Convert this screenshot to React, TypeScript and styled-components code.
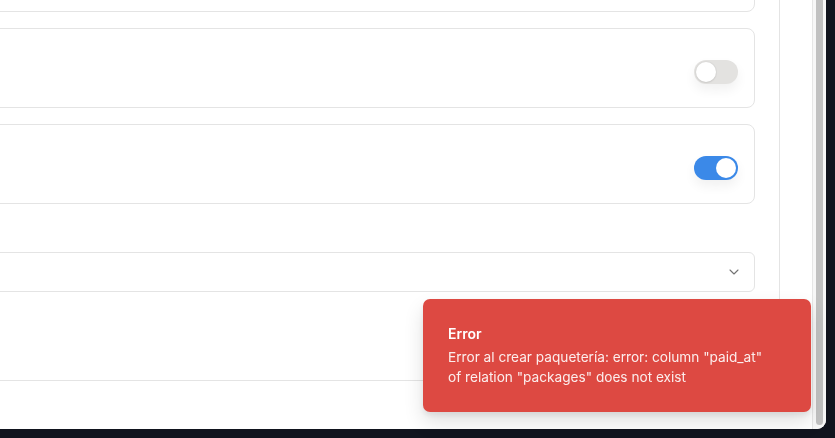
import styled, { createGlobalStyle } from 'styled-components'
import { ChevronDown } from 'lucide-react'

const GlobalStyle = createGlobalStyle`
  html, body {
    margin: 0;
    padding: 0;
    background: #11141e;
    font-family: Inter, "Noto Sans", sans-serif;
    overflow: hidden;
  }
  * {
    box-sizing: border-box;
  }
`

const Desktop = styled.div`
  width: 835px;
  height: 438px;
  background: #11141e;
`

const Window = styled.div`
  display: flex;
  width: 826px;
  height: 429px;
  background: #ffffff;
  border-bottom-right-radius: 9px;
  overflow: hidden;
`

const Main = styled.div`
  display: flex;
  flex: 1;
  min-width: 0;
  padding-right: 32px;
  overflow: hidden;
`

const Panel = styled.section`
  display: flex;
  flex-direction: column;
  flex: 1;
  margin-left: -240px;
  margin-top: -68px;
  height: 449px;
  padding: 0 24px 88px 0;
  border-right: 1px solid #e4e4e4;
  border-bottom: 1px solid #e4e4e4;
`

const CardList = styled.div`
  display: flex;
  flex-direction: column;
  gap: 16px;
`

const SettingCard = styled.div`
  display: flex;
  align-items: flex-start;
  justify-content: flex-end;
  height: 80px;
  padding: 31px 16px 0 16px;
  border: 1px solid #e4e4e4;
  border-radius: 8px;
  background: #ffffff;
`

const Toggle = styled.button<{ $on?: boolean }>`
  position: relative;
  display: flex;
  align-items: center;
  justify-content: ${({ $on }) => ($on ? 'flex-end' : 'flex-start')};
  width: 44px;
  height: 24px;
  padding: 2px;
  border: none;
  border-radius: 999px;
  background: ${({ $on }) => ($on ? '#3b89e8' : '#e3e2e0')};
  box-shadow: 0 6px 12px rgba(0, 0, 0, 0.06);
  cursor: pointer;
`

const Knob = styled.span<{ $on?: boolean }>`
  width: 20px;
  height: 20px;
  border-radius: 50%;
  background: #ffffff;
  box-shadow: ${({ $on }) =>
    $on ? '0 0 0 1px #3b89e8' : '0 1px 2px rgba(0, 0, 0, 0.08), 0 0 0 1px #dcdbd9'};
`

const Select = styled.div`
  display: flex;
  align-items: center;
  justify-content: flex-end;
  height: 40px;
  margin-top: 48px;
  padding: 0 12px;
  border: 1px solid #e4e4e4;
  border-radius: 6px;
  color: #737373;
`

const Scrollbar = styled.div`
  display: flex;
  width: 14px;
  padding: 0 3px 4px 3px;
  border-left: 1px solid #e6e6e6;
  background: #f7f7f7;
`

const Thumb = styled.div`
  flex: 1;
  margin-top: -20px;
  border-radius: 4px;
  background: #c1c1c1;
`

const Toast = styled.div`
  position: fixed;
  right: 24px;
  bottom: 26px;
  width: 388px;
  padding: 25px 25px;
  border-radius: 7px;
  background: #dd4942;
  color: #ffffff;
  box-shadow: 0 10px 20px rgba(0, 0, 0, 0.12), 0 3px 6px rgba(0, 0, 0, 0.08);
`

const ToastTitle = styled.div`
  font-size: 14px;
  font-weight: 600;
  line-height: 20px;
`

const ToastMessage = styled.div`
  margin-top: 4px;
  font-size: 13.65px;
  line-height: 19.5px;
  color: rgba(255, 255, 255, 0.9);
`

export default function App() {
  return (
    <>
      <GlobalStyle />
      <Desktop>
        <Window>
          <Main>
            <Panel>
              <CardList>
                <SettingCard />
                <SettingCard>
                  <Toggle aria-label="off">
                    <Knob />
                  </Toggle>
                </SettingCard>
                <SettingCard>
                  <Toggle $on aria-label="on">
                    <Knob $on />
                  </Toggle>
                </SettingCard>
              </CardList>
              <Select>
                <ChevronDown size={16} strokeWidth={1.6} />
              </Select>
            </Panel>
          </Main>
          <Scrollbar>
            <Thumb />
          </Scrollbar>
        </Window>
      </Desktop>
      <Toast>
        <ToastTitle>Error</ToastTitle>
        <ToastMessage>
          Error al crear paquetería: error: column "paid_at"
          <br />
          of relation "packages" does not exist
        </ToastMessage>
      </Toast>
    </>
  )
}
